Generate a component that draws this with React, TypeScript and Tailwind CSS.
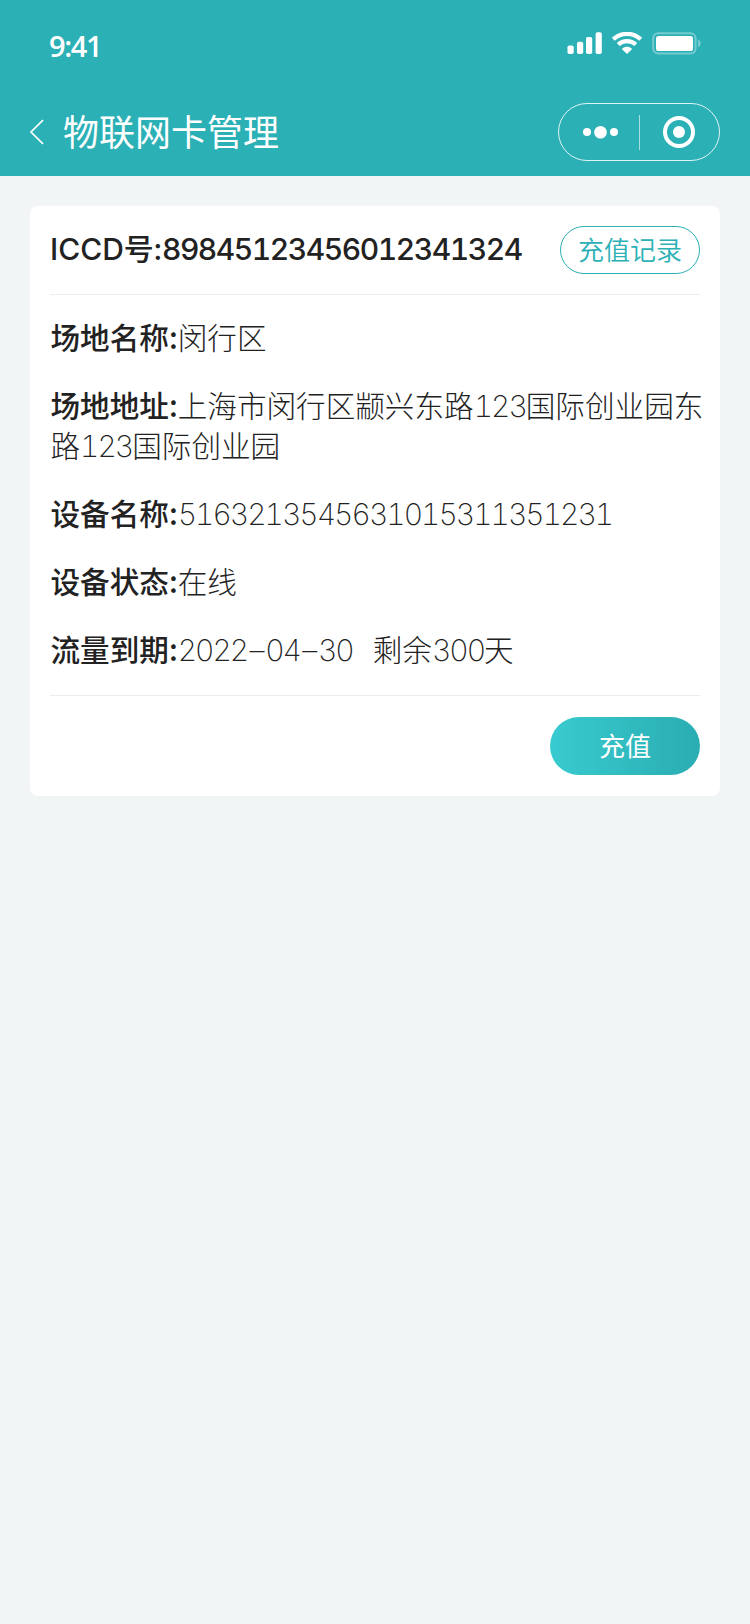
import type { ReactNode } from "react";

const cjk = "font-['Noto_Sans_CJK_SC',sans-serif]";

function Num({ children }: { children: ReactNode }) {
  return (
    <span className="font-['Inter',sans-serif] text-[30px] leading-none font-extralight tabular-nums tracking-[-2px]">
      {children}
    </span>
  );
}

function Dash() {
  return <span className="mr-[2.8px] ml-[2.2px]">–</span>;
}

function Row({ label, children }: { label: string; children: ReactNode }) {
  return (
    <p className="pl-[0.5px] text-[29.6px] leading-10 font-light whitespace-nowrap">
      <span className="font-medium">{label}:</span>
      {children}
    </p>
  );
}

function StatusIcons() {
  return (
    <svg width="136" height="24" viewBox="0 0 136 24" fill="none">
      <g fill="#fff">
        <rect x="0.5" y="13.5" width="6.2" height="8.5" rx="1.8" />
        <rect x="10" y="9.8" width="6.2" height="12.2" rx="1.8" />
        <rect x="19" y="5" width="6.2" height="17" rx="1.8" />
        <rect x="28.6" y="0.3" width="6.2" height="21.7" rx="1.8" />
        <path d="M55.3 16.4C58 14.3 62 14.3 64.7 16.4Q65.2 16.9 64.7 17.4L60.5 21.6Q60 22 59.5 21.6L55.3 17.4Q54.8 16.9 55.3 16.4Z" />
      </g>
      <g stroke="#fff" strokeWidth="4.2">
        <path d="M46.3 7.3a19.8 19.8 0 0 1 27.4 0" />
        <path d="M51.2 12.6a12.8 12.8 0 0 1 17.6 0" />
      </g>
      <rect x="86.2" y="1.2" width="42.4" height="20.4" rx="5" stroke="#fff" strokeOpacity="0.35" strokeWidth="2" />
      <rect x="89" y="4" width="37" height="15" rx="2.6" fill="#fff" />
      <path d="M131.2 7.6c3.2 1.4 3.2 6.4 0 7.8Z" fill="#fff" fillOpacity="0.4" />
    </svg>
  );
}

function Capsule() {
  return (
    <svg width="162" height="58" viewBox="0 0 162 58" fill="none">
      <rect x="0.5" y="0.5" width="161" height="57" rx="28.5" stroke="#fff" strokeOpacity="0.85" />
      <path d="M81.5 12v35" stroke="#fff" strokeOpacity="0.6" />
      <circle cx="29" cy="29" r="4" fill="#fff" />
      <circle cx="42.5" cy="29.3" r="6.3" fill="#fff" />
      <circle cx="56" cy="29" r="4" fill="#fff" />
      <circle cx="121" cy="29" r="14" stroke="#fff" strokeWidth="4" />
      <circle cx="121" cy="29" r="6" fill="#fff" />
    </svg>
  );
}

export default function App() {
  return (
    <div className={`min-h-[1624px] w-[750px] bg-[#f1f5f6] text-[#222] ${cjk}`}>
      <header className="flex h-[176px] flex-col bg-[#2bb0b5] text-white">
        <div className="flex h-[88px] items-start justify-between pt-8 pr-[47px] pl-[49px]">
          <span className="-mt-px font-['Open_Sans',sans-serif] text-[29px] leading-[30px] font-semibold tracking-[-1.4px]">
            9:41
          </span>
          <StatusIcons />
        </div>
        <div className="flex h-[88px] items-center pr-[30px] pl-[29px]">
          <svg width="15" height="26" viewBox="0 0 15 26" fill="none">
            <path d="M14 1.2 2 13l12 11.8" stroke="#fff" strokeWidth="1.7" />
          </svg>
          <h1 className="mr-auto mb-1 ml-[19px] text-[36px] leading-[54px] font-normal">物联网卡管理</h1>
          <Capsule />
        </div>
      </header>
      <main className="px-[30px] pt-[30px]">
        <section className="flex h-[590px] flex-col rounded-lg bg-white px-5">
          <div className="flex h-[89px] items-center justify-between border-b border-[#ececec]">
            <h2 className="mb-0.5 font-['Inter','Noto_Sans_CJK_SC',sans-serif] text-[30px] leading-10 font-medium whitespace-nowrap tabular-nums">
              ICCD号:<span className="tracking-[-1.45px]">89845123456012341324</span>
            </h2>
            <button className="h-12 w-[140px] rounded-full border border-[#2bb0b5] pb-0.5 text-[26px] leading-[44px] font-[350] text-[#2bb0b5]">
              充值记录
            </button>
          </div>
          <div className="flex h-[401px] flex-col gap-7 border-b border-[#ececec] pt-[22px]">
            <Row label="场地名称">闵行区</Row>
            <Row label="场地地址">
              上海市闵行区颛兴东路<Num>123</Num>国际创业园东
              <br />路<Num>123</Num>国际创业园
            </Row>
            <Row label="设备名称">
              <Num>5163213545631015311351231</Num>
            </Row>
            <Row label="设备状态">在线</Row>
            <Row label="流量到期">
              <Num>
                2022
                <Dash />
                04
                <Dash />
                30
              </Num>
              <span className="ml-5">剩余</span>
              <Num>300</Num>天
            </Row>
          </div>
          <button className="mt-[21px] h-[58px] w-[150px] self-end rounded-full bg-linear-to-r from-[#38cbcf] to-[#2aadb2] pb-0.5 text-[26px] leading-[56px] text-white">
            充值
          </button>
        </section>
      </main>
    </div>
  );
}
